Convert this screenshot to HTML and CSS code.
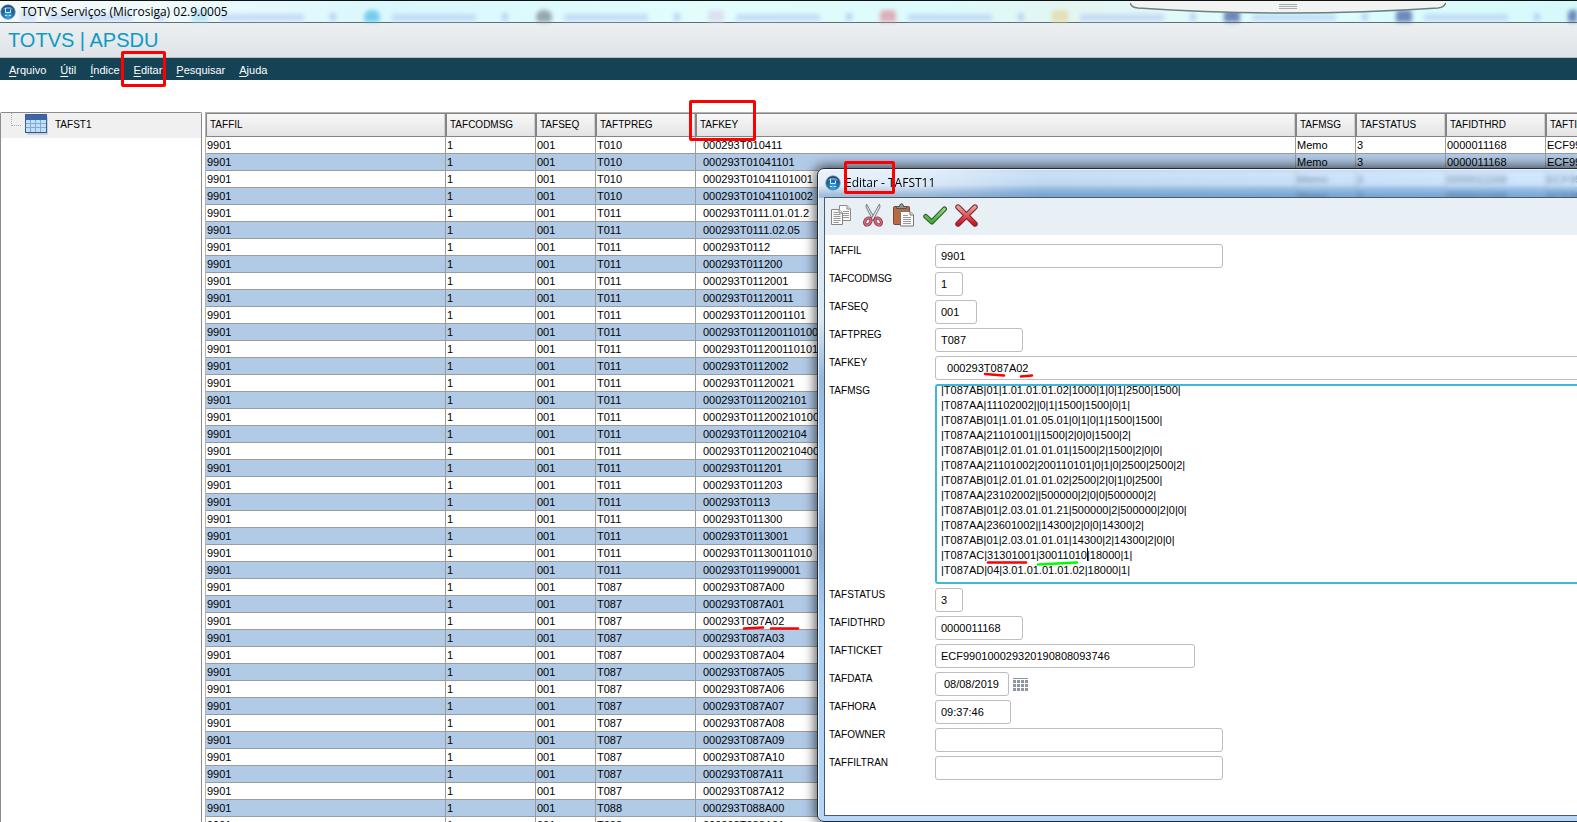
FILE: index.html
```html
<!DOCTYPE html>
<html lang="pt-BR">
<head>
<meta charset="utf-8">
<title>TOTVS Serviços (Microsiga) 02.9.0005</title>
<link rel="stylesheet" href="styles.css">
</head>
<body>
<svg class="defs" aria-hidden="true">
  <defs>
    <radialGradient id="orb" cx="50%" cy="75%" r="70%"><stop offset="0" stop-color="#3fb4ee"/><stop offset=".5" stop-color="#1c6fb0"/><stop offset="1" stop-color="#16406f"/></radialGradient>
    <linearGradient id="green" x1="0" y1="0" x2="0" y2="1"><stop offset="0" stop-color="#9ad27a"/><stop offset="1" stop-color="#3fae2c"/></linearGradient>
    <linearGradient id="red" x1="0" y1="0" x2="0" y2="1"><stop offset="0" stop-color="#f09a9a"/><stop offset="1" stop-color="#d2141c"/></linearGradient>
    <symbol id="logo" viewBox="0 0 16 16">
      <circle cx="8" cy="8" r="7.3" fill="url(#orb)" stroke="#8fa3b5" stroke-width=".8"/>
      <path d="M2.500 6C4 1.500 12 1.500 13.500 6C11 4.800 5 4.800 2.500 6z" fill="#9cc6e6" opacity=".6"/>
      <path d="M5.500 4V8.500H10.500V5.500" fill="none" stroke="#d6eefc"/>
      <path d="M5 11.500H7M9 11.500H11" stroke="#bfe6fb"/>
    </symbol>
  </defs>
</svg>

<div class="app">
  <header class="titlebar">
    <div class="glass" aria-hidden="true">
      <span class="ghost"><i class="dot pale"></i><b></b><em></em></span>
      <span class="ghost"><i class="dot sky"></i><b></b><em></em></span>
      <span class="ghost"><i class="dot cyan"></i><b></b><em></em></span>
      <span class="ghost"><i class="dot gray"></i><b></b><em></em></span>
      <span class="ghost"><i class="dot pink"></i><b></b><em></em></span>
      <span class="ghost"><i class="dot red"></i><b></b><em></em></span>
      <span class="ghost"><i class="dot gold"></i><b></b><em></em></span>
      <span class="ghost"><i class="dot navy"></i><b></b><em></em></span>
      <span class="ghost"><i class="dot navy"></i><b></b><em></em></span>
      <span class="ghost"><i class="dot navy"></i></span>
    </div>
    <svg class="logo" aria-hidden="true"><use href="#logo"/></svg>
    <span class="caption">TOTVS Serviços (Microsiga) 02.9.0005</span>
    <svg class="handle" viewBox="0 0 316 15" aria-hidden="true">
      <path d="M0 0C2 5 3 6.500 8 7Q158 17 308 7C313 6.500 314 5 316 0z" fill="#f2f3f3"/>
      <path d="M0 2C2 5.500 3 6.500 8 7Q158 17 308 7C313 6.500 314 5 316 2" fill="none" stroke="#6b8181" stroke-width="1.500"/>
      <path d="M149 3.500H167M149 5.500H167M149 7.500H167" stroke="#a9adad"/>
    </svg>
  </header>

  <h1 class="brand">TOTVS | APSDU</h1>

  <nav class="menu">
    <button type="button"><u>A</u>rquivo</button>
    <button type="button"><u>Ú</u>til</button>
    <button type="button"><u>Í</u>ndice</button>
    <button type="button"><u>E</u>ditar</button>
    <button type="button"><u>P</u>esquisar</button>
    <button type="button"><u>A</u>juda</button>
  </nav>

  <main class="workspace">
    <aside class="tree">
      <div class="node">
        <span class="branch"></span>
        <svg class="sheet" viewBox="0 0 24 22" aria-hidden="true">
          <rect x="2" y="3" width="21" height="18" rx="1" fill="#b6bcc4" opacity=".6"/>
          <rect x=".5" y=".5" width="21" height="18" fill="#bfe0fb" stroke="#3e5f94"/>
          <rect x="1" y="1" width="20" height="5" fill="#3f66a4"/>
          <path d="M1 9.500H21M1 13.500H21M5.500 6V18M10.500 6V18M15.500 6V18" stroke="#86a9d2"/>
          <path d="M.5 18.500H21.500" stroke="#2f5590"/>
        </svg>
        <span>TAFST1</span>
      </div>
    </aside>
    <section class="grid">
      <table>
        <colgroup><col class="c-fil"><col class="c-cod"><col class="c-seq"><col class="c-reg"><col class="c-key"><col class="c-seq"><col class="c-cod"><col class="c-reg"><col class="c-tick"></colgroup>
        <thead><tr><th>TAFFIL</th><th>TAFCODMSG</th><th>TAFSEQ</th><th>TAFTPREG</th><th>TAFKEY</th><th>TAFMSG</th><th>TAFSTATUS</th><th>TAFIDTHRD</th><th>TAFTICKET</th></tr></thead>
        <tbody id="rows"></tbody>
      </table>
    </section>
  </main>
</div>

<div class="dialog" role="dialog" aria-labelledby="dlg-title">
  <div class="dlg-title">
    <svg class="logo" aria-hidden="true"><use href="#logo"/></svg>
    <span class="caption" id="dlg-title">Editar - TAFST11</span>
  </div>
  <div class="dlg-body">
    <div class="tools">
      <button type="button" aria-label="Copiar"><svg viewBox="0 0 24 24">
        <path d="M9.500 2.500H17L20.500 6V17.500H9.500z" fill="#fafafa" stroke="#8b8b8b"/><path d="M17 2.500V6H20.500" fill="#ddd" stroke="#8b8b8b"/><path d="M13 8.500H19M13 10.500H19M13 12.500H19M13 14.500H19" stroke="#999"/>
        <path d="M1.500 6.500H9L12.500 10V21.500H1.500z" fill="#fafafa" stroke="#858585"/><path d="M9 6.500V10H12.500" fill="#ddd" stroke="#858585"/><path d="M3.500 9.500H8M3.500 11.500H10.500M3.500 13.500H10.500M3.500 15.500H10.500M3.500 17.500H10.500M3.500 19.500H9" stroke="#999"/></svg></button>
      <button type="button" aria-label="Recortar"><svg viewBox="0 0 24 24">
        <path d="M5.500 1L14 16L12 17.500L5 4z" fill="#d8dcde" stroke="#777c80"/><path d="M18.500 1L10 16L12 17.500L19 4z" fill="#e9ecee" stroke="#777c80"/>
        <ellipse cx="6.800" cy="18.500" rx="2.800" ry="3.800" transform="rotate(35 6.800 18.500)" fill="none" stroke="#7c3340" stroke-width="3.200"/><ellipse cx="17.200" cy="18.500" rx="2.800" ry="3.800" transform="rotate(-35 17.200 18.500)" fill="none" stroke="#7c3340" stroke-width="3.200"/>
        <ellipse cx="6.800" cy="18.500" rx="2.800" ry="3.800" transform="rotate(35 6.800 18.500)" fill="none" stroke="#d7667a" stroke-width="1.800"/><ellipse cx="17.200" cy="18.500" rx="2.800" ry="3.800" transform="rotate(-35 17.200 18.500)" fill="none" stroke="#d7667a" stroke-width="1.800"/></svg></button>
      <button type="button" aria-label="Colar"><svg viewBox="0 0 24 24">
        <rect x="1.500" y="3.500" width="16" height="18" rx="1" fill="#b66b41" stroke="#7b4527"/><path d="M4.500 5.500V3.500H7.500Q7.500 .8 9.500 .8Q11.500 .8 11.500 3.500H14.500V5.500z" fill="#8f9494" stroke="#555"/>
        <path d="M8.500 8.500H18L21.500 12V23H8.500z" fill="#fafafa" stroke="#777"/><path d="M18 8.500V12H21.500" fill="#ddd" stroke="#777"/><path d="M11 12.500H16M11 14.500H19M11 16.500H19M11 18.500H19M11 20.500H19" stroke="#999"/></svg></button>
      <button type="button" aria-label="Confirmar"><svg viewBox="0 0 24 24">
        <path d="M2.800 13.500L8.800 19L21.500 6" fill="none" stroke="#2b5a2f" stroke-width="5" stroke-linecap="round" stroke-linejoin="round"/><path d="M2.800 13.500L8.800 19L21.500 6" fill="none" stroke="url(#green)" stroke-width="3" stroke-linecap="round" stroke-linejoin="round"/></svg></button>
      <button type="button" aria-label="Cancelar"><svg viewBox="0 0 24 24">
        <path d="M4 4L21 21M21 4L4 21" stroke="#6f2a2e" stroke-width="5.400" stroke-linecap="round"/><path d="M4 4L21 21M21 4L4 21" stroke="url(#red)" stroke-width="3.400" stroke-linecap="round"/></svg></button>
    </div>
    <form class="form">
      <label for="f1">TAFFIL</label><input id="f1" class="w-wide" value="9901">
      <label for="f2">TAFCODMSG</label><input id="f2" class="w-one" value="1">
      <label for="f3">TAFSEQ</label><input id="f3" class="w-three" value="001">
      <label for="f4">TAFTPREG</label><input id="f4" class="w-ten" value="T087">
      <label for="f5">TAFKEY</label><input id="f5" class="w-full" value="  000293T087A02">
      <label for="f6">TAFMSG</label><textarea id="f6" wrap="off">|T087AB|01|1.01.01.01.02|1000|1|0|1|2500|1500|
|T087AA|11102002||0|1|1500|1500|0|1|
|T087AB|01|1.01.01.05.01|0|1|0|1|1500|1500|
|T087AA|21101001||1500|2|0|0|1500|2|
|T087AB|01|2.01.01.01.01|1500|2|1500|2|0|0|
|T087AA|21101002|200110101|0|1|0|2500|2500|2|
|T087AB|01|2.01.01.01.02|2500|2|0|1|0|2500|
|T087AA|23102002||500000|2|0|0|500000|2|
|T087AB|01|2.03.01.01.21|500000|2|500000|2|0|0|
|T087AA|23601002||14300|2|0|0|14300|2|
|T087AB|01|2.03.01.01.01|14300|2|14300|2|0|0|
|T087AC|31301001|30011010|18000|1|
|T087AD|04|3.01.01.01.01.02|18000|1|</textarea>
      <label for="f7">TAFSTATUS</label><input id="f7" class="w-one" value="3">
      <label for="f8">TAFIDTHRD</label><input id="f8" class="w-ten" value="0000011168">
      <label for="f9">TAFTICKET</label><input id="f9" class="w-ticket" value="ECF990100029320190808093746">
      <label for="f10">TAFDATA</label>
      <div class="date"><input id="f10" class="w-date" value="08/08/2019">
        <button type="button" aria-label="Calendário"><svg viewBox="0 0 15 13"><path d="M0 .5H15" stroke="#8e97a1"/><path d="M0 3.500H15M0 7.500H15M0 11.500H15" stroke="#8e97a1" stroke-width="3" stroke-dasharray="3 1"/></svg></button></div>
      <label for="f11">TAFHORA</label><input id="f11" class="w-time" value="09:37:46">
      <label for="f12">TAFOWNER</label><input id="f12" class="w-wide">
      <label for="f13">TAFFILTRAN</label><input id="f13" class="w-wide">
    </form>
  </div>
</div>

<div class="mark mark-menu"></div>
<div class="mark mark-key"></div>
<div class="mark mark-dialog"></div>
<svg class="strokes" aria-hidden="true">
  <g fill="none" stroke="#f00" stroke-width="2.600" stroke-linecap="round">
    <path d="M744 628.500L763 627.500M771 628.500H798"/>
    <path d="M985 374L1004 375.500M1021 376.500L1032 375.500"/>
    <path d="M988 562.500H1026"/>
    <path d="M1038 564.500L1077 562.500" stroke="#0f0"/>
  </g>
  <path d="M1087.500 548V561" stroke="#000"/>
</svg>
<script src="grid.js"></script>
</body>
</html>
```
FILE: grid.js
```js
// Records of TAFST1: [TAFTPREG, TAFKEY suffix after "000293"]
const records = [
  ["T010", "T010411"], ["T010", "T01041101"], ["T010", "T01041101001"], ["T010", "T01041101002"],
  ["T011", "T0111.01.01.2"], ["T011", "T0111.02.05"], ["T011", "T0112"], ["T011", "T011200"],
  ["T011", "T0112001"], ["T011", "T01120011"], ["T011", "T0112001101"], ["T011", "T011200110100"],
  ["T011", "T011200110101"], ["T011", "T0112002"], ["T011", "T01120021"], ["T011", "T0112002101"],
  ["T011", "T011200210100"], ["T011", "T0112002104"], ["T011", "T011200210400"], ["T011", "T011201"],
  ["T011", "T011203"], ["T011", "T0113"], ["T011", "T011300"], ["T011", "T0113001"],
  ["T011", "T01130011010"], ["T011", "T011990001"]
];
for (let i = 0; i <= 12; i++) records.push(["T087", "T087A" + String(i).padStart(2, "0")]);
records.push(["T088", "T088A00"], ["T088", "T088A01"]);

document.getElementById("rows").innerHTML = records.map(([reg, key]) =>
  `<tr><td>9901</td><td>1</td><td>001</td><td>${reg}</td><td class="key">000293${key}</td><td>Memo</td><td>3</td><td>0000011168</td><td>ECF990100029320190808093746</td></tr>`
).join("");

document.getElementById("f6").scrollTop = 3;
```
FILE: styles.css
```css
* { box-sizing: border-box; }
html, body { height: 100%; }
body {
  margin: 0;
  overflow: hidden;
  position: relative;
  background: #fff;
  color: #000;
  font: 11px/16px "Liberation Sans", Arial, sans-serif;
}
button { padding: 0; border: 0; background: none; color: inherit; font: inherit; }
.defs { position: absolute; width: 0; height: 0; }
.app { display: flex; flex-direction: column; height: 100%; }

.titlebar {
  position: relative;
  display: flex;
  flex: none;
  align-items: center;
  gap: 5px;
  height: 23px;
  border-top: 1px solid #111;
  border-bottom: 1px solid #5d6f73;
  background: linear-gradient(90deg, #f4fafa, #effafc 10%, #d9f8fd 25%, #e2fdfc 45%, #dcfbfb 60%, #e4f5f2 68%, #dffdfd 80%, #d5fafb);
}
.logo { position: relative; flex: none; width: 16px; height: 16px; }
.caption { position: relative; font: 12px/16px "Open Sans", "Noto Sans", sans-serif; }
.glass { position: absolute; inset: 0; display: flex; overflow: hidden; padding: 9px 0 0 20px; filter: blur(2px); opacity: .7; }
.ghost { display: flex; flex: none; align-items: center; gap: 12px; width: 172px; height: 14px; }
.ghost b { width: 84px; height: 7px; background: #b9d0f5; }
.ghost em { width: 6px; height: 8px; margin-left: 14px; background: #a9c4ee; }
.dot { width: 16px; height: 14px; border-radius: 4px; }
.pale { background: #c8ddf5; }
.sky { background: #a5dcf2; }
.cyan { border-radius: 8px; background: #4db8e6; }
.gray { border-radius: 8px; background: #76858f; }
.pink { background: #dbd5f0; }
.red { background: #dd8f9d; }
.gold { background: #e6d5a0; }
.navy { background: #3f58a0; }
.handle { position: absolute; top: 0; right: 131px; width: 316px; height: 15px; }

.brand {
  flex: none;
  margin: 0;
  padding: 6px 8px 5px;
  border-bottom: 1px solid #b9bec1;
  background: linear-gradient(#edf0f2, #dfe3e7);
  color: #0e9ac4;
  font-size: 20px;
  font-weight: 400;
  line-height: 23px;
}
.menu { display: flex; flex: none; gap: 14px; height: 22px; padding: 0 9px; background: #154255; color: #fff; }
.menu button { padding-top: 2px; }
.menu u { text-underline-offset: 2px; }

.workspace { display: flex; flex: 1; gap: 3px; min-height: 0; padding-top: 32px; }
.tree { flex: 0 0 202px; border: 1px solid #8c8c8c; border-bottom: 0; border-radius: 2px 2px 0 0; }
.node { display: flex; align-items: center; height: 25px; padding: 0 0 1px 10px; background: #f0f0f0; font-size: 10px; }
.branch { align-self: flex-start; width: 10px; height: 13px; border: dotted #aaa; border-width: 0 0 1px 1px; }
.sheet { width: 24px; height: 22px; margin: 0 6px 0 4px; }
.grid { flex: 1; min-width: 0; overflow: hidden; border: solid #b4b4b4; border-width: 1px 0 0 1px; }
table { width: 1540px; border-collapse: separate; border-spacing: 0; table-layout: fixed; }
.c-fil { width: 240px; }
.c-cod { width: 90px; }
.c-seq { width: 60px; }
.c-reg { width: 100px; }
.c-key { width: 600px; }
.c-tick { width: 200px; }
th {
  height: 24px;
  padding: 0 3px 1px;
  border: 1px solid #858585;
  background: linear-gradient(#f8f8f8, #e4e4e4);
  box-shadow: inset -1px 0 #cfcfcf;
  font-size: 10px;
  font-weight: 400;
  text-align: left;
}
td { height: 17px; padding: 0 1px; border: solid #9c9c9c; border-width: 0 1px 1px 0; overflow: hidden; line-height: 16px; white-space: nowrap; }
td.key { padding-left: 7px; }
tbody tr:nth-child(even) { background: #b1cae6; }

.dialog {
  position: absolute;
  top: 168px;
  bottom: 0;
  left: 817px;
  right: -40px;
  display: flex;
  flex-direction: column;
  padding: 0 7px 5px 6px;
  border: 1px solid #222c38;
  border-radius: 7px;
  background:
    linear-gradient(rgba(255, 255, 255, .3), rgba(255, 255, 255, 0) 16px, rgba(40, 100, 160, .35) 26px) 0 0 / 100% 29px no-repeat,
    linear-gradient(90deg, #e3eefa, #dae9f8 100px, rgba(160, 198, 236, .7) 220px, rgba(168, 210, 255, .6)) 0 0 / 100% 29px no-repeat,
    linear-gradient(transparent 29px, #d6e5f4 29px, #d9e8f6 150px, #94b8de 210px, #a9d0f6 300px, #84a9d4 370px, #a9cff6 450px, #b4d6fa);
  backdrop-filter: blur(2px);
  box-shadow: inset 1px 1px rgba(255, 255, 255, .7), 0 0 12px 2px rgba(0, 0, 0, .65);
}
.dlg-title { display: flex; align-items: center; gap: 4px; height: 28px; padding: 0 1px; }
.dlg-body { flex: 1; border: 1px solid #4c5a68; background: #fff; }
.tools { display: flex; gap: 7px; height: 37px; padding: 5px 5px 0; background: #e8eff5; }
.tools button, .tools svg { display: block; width: 24px; height: 24px; }
.form { display: grid; grid-template-columns: 106px 1fr; gap: 4px 0; padding: 9px 0 0 4px; justify-items: start; }
.form label { font-size: 10px; line-height: 14px; }
.form input, .form textarea { border: 1px solid #bdbdbd; border-radius: 3px; background: #fff; color: #000; font: inherit; outline: 0; }
.form input { height: 24px; padding: 0 5px; white-space: pre; }
.form textarea { display: block; width: 100%; height: 200px; padding: 0 4px 8px; border: 2px solid #3fb8d8; line-height: 15px; resize: none; overflow: hidden; }
.w-one { width: 28px; }
.w-three { width: 42px; }
.w-ten { width: 88px; }
.w-wide { width: 288px; }
.w-ticket { width: 260px; }
.w-time { width: 76px; }
.form .w-date { width: 74px; padding-right: 9px; text-align: right; }
.w-full { width: 100%; }
.date { display: flex; align-items: center; gap: 4px; }
.date button, .date svg { display: block; width: 15px; height: 13px; }

.mark { position: absolute; border: 3px solid #f00; border-radius: 2px; }
.mark-menu { left: 121px; top: 51px; width: 45px; height: 36px; }
.mark-key { left: 689px; top: 100px; width: 67px; height: 41px; }
.mark-dialog { left: 844px; top: 161px; width: 51px; height: 33px; }
.strokes { position: absolute; inset: 0; width: 100%; height: 100%; pointer-events: none; }
```
